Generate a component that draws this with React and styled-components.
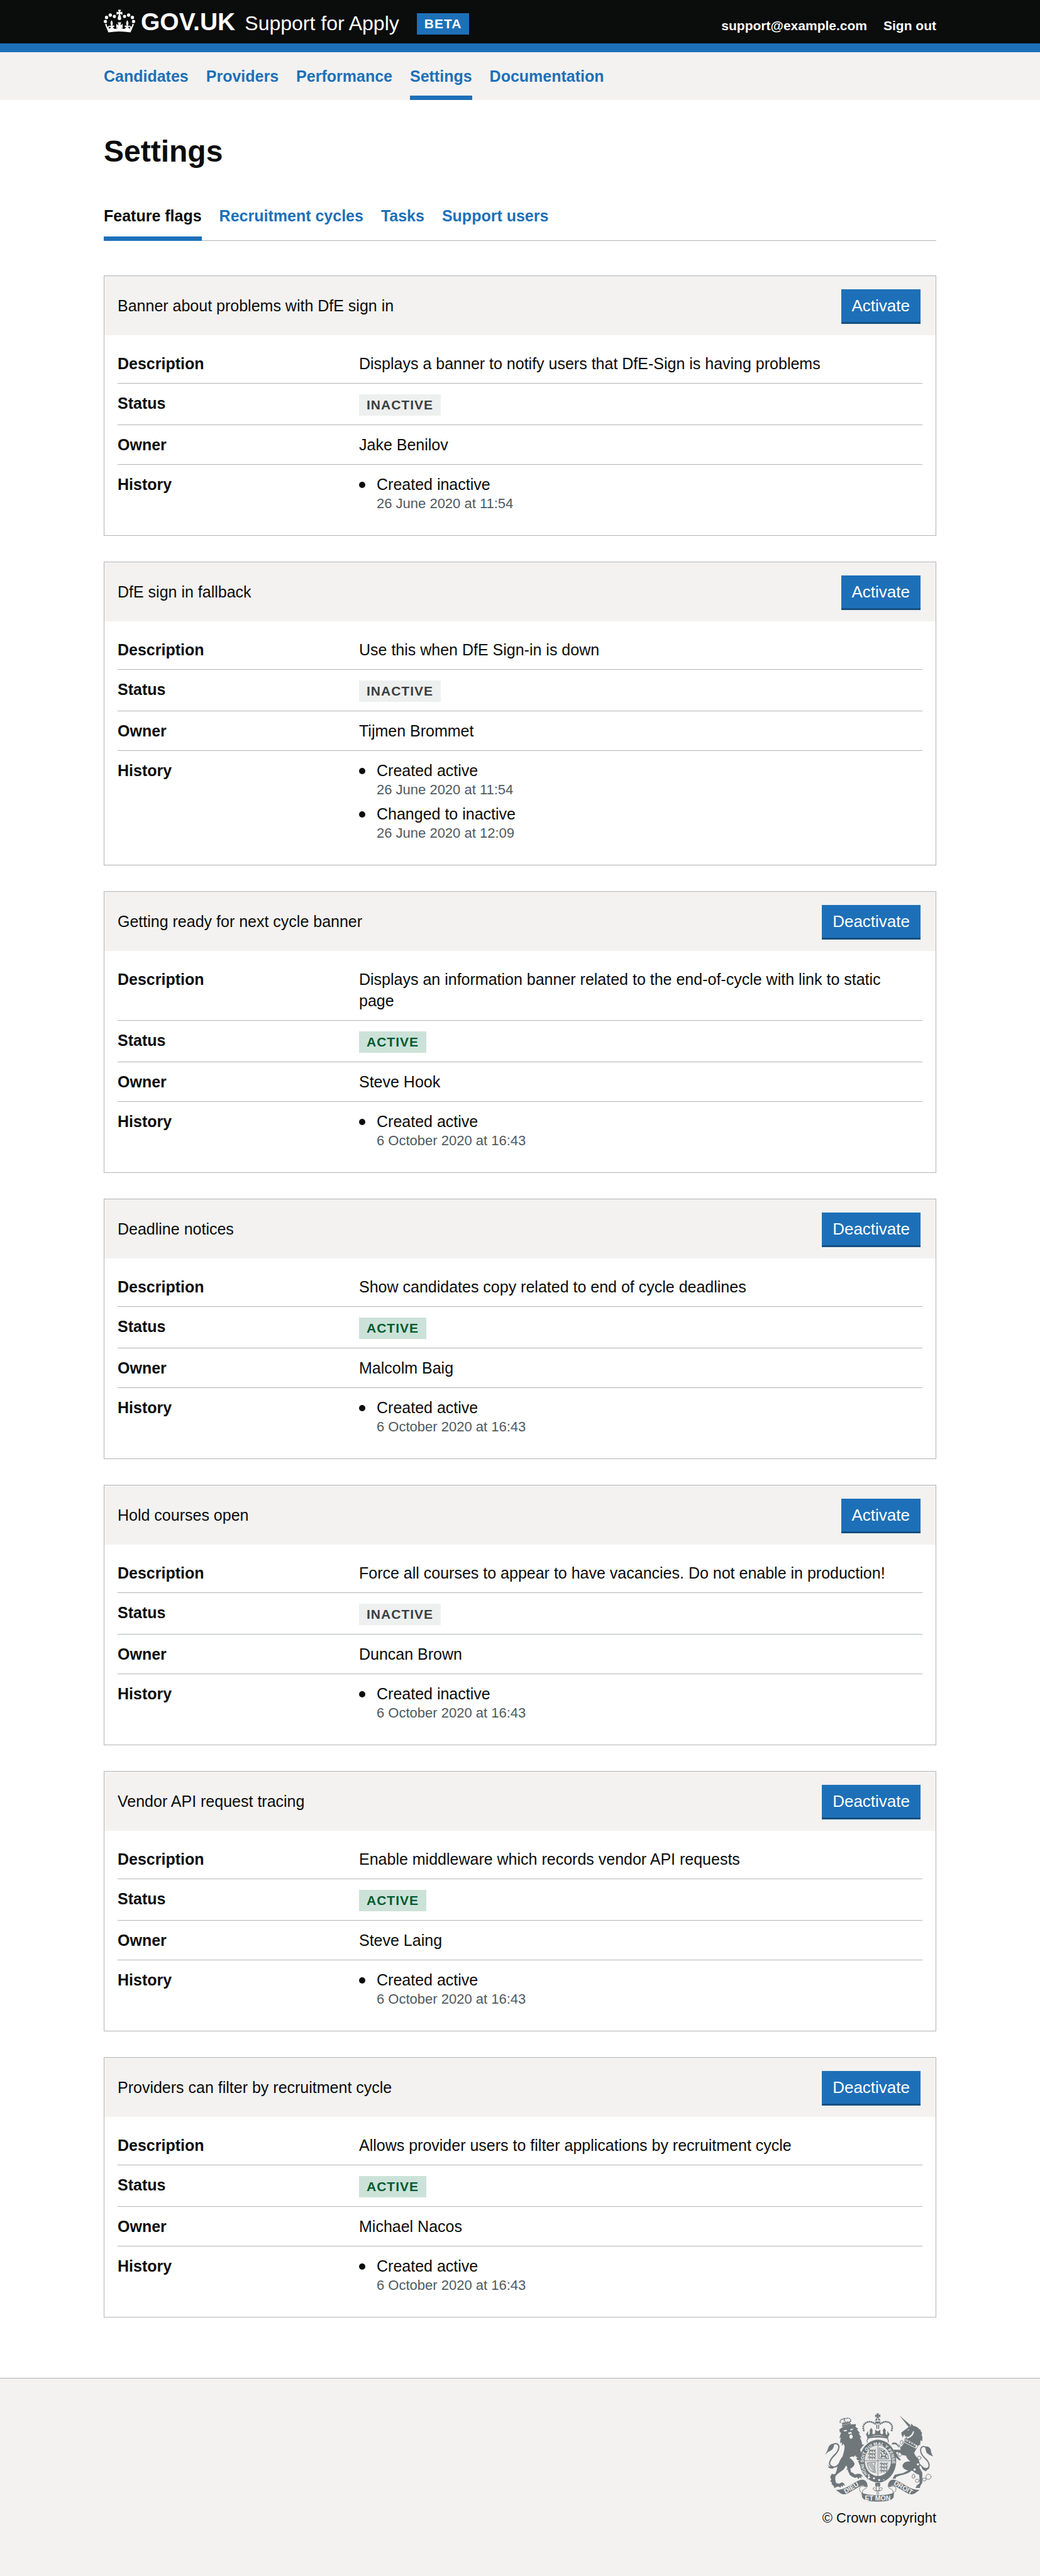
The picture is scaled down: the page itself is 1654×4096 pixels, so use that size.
import React from "react";
import styled, { createGlobalStyle, css } from "styled-components";

const color = {
  ink: "#0b0c0c",
  blue: "#1d70b8",
  pale: "#f3f2f1",
  rule: "#b1b4b6",
  muted: "#505a5f",
  crest: "#6f777b",
};

const GlobalStyle = createGlobalStyle`
  *, *::before, *::after { box-sizing: border-box; }
  html { background: ${color.pale}; }
  body {
    margin: 0;
    background: #fff;
    color: ${color.ink};
    font-family: "Liberation Sans", Arial, sans-serif;
    font-size: 25px;
    line-height: 34px;
  }
`;

const Container = styled.div`
  max-width: 1404px;
  margin: 0 auto;
  padding: 0 40px;
`;

const HeaderBar = styled.header`
  background: ${color.ink};
  border-bottom: 14px solid ${color.blue};
  color: #fff;
`;

const HeaderRow = styled(Container)`
  display: flex;
  justify-content: space-between;
  align-items: flex-end;
  min-height: 69px;
  padding-bottom: 14px;
`;

const Brand = styled.div`
  display: flex;
  align-items: flex-end;
  gap: 28px;
`;

const HomeLink = styled.a`
  display: flex;
  align-items: flex-end;
  gap: 9px;
  color: inherit;
  text-decoration: none;
`;

const CrownIcon = styled.svg`
  width: 50px;
  height: 40px;
  fill: currentColor;
`;

const Wordmark = styled.span`
  font-size: 39px;
  font-weight: 700;
  line-height: 40px;
`;

const Product = styled.span`
  margin-left: 6px;
  font-size: 32px;
  line-height: 36px;
`;

const tagTones = {
  blue: css`
    background: ${color.blue};
    color: #fff;
  `,
  grey: css`
    background: #eeefef;
    color: #383f43;
  `,
  green: css`
    background: #cce2d8;
    color: #005a30;
  `,
};

const Tag = styled.strong`
  display: block;
  width: fit-content;
  padding: 0 12px;
  font-size: 21px;
  font-weight: 700;
  line-height: 34px;
  letter-spacing: 1px;
  text-transform: uppercase;
  ${({ $tone }) => tagTones[$tone]}
`;

const AccountNav = styled.nav`
  display: flex;
  gap: 26px;
`;

const AccountLink = styled.a`
  color: #fff;
  font-size: 21px;
  font-weight: 700;
  line-height: 28px;
  text-decoration: none;
`;

const PrimaryNav = styled.nav`
  background: ${color.pale};
`;

const NavList = styled.ul`
  display: flex;
  flex-wrap: wrap;
  gap: 28px;
  margin: 0;
  padding: 0;
  list-style: none;
`;

const PrimaryList = styled(NavList)`
  padding-top: 21px;
`;

const NavLink = styled.a`
  display: block;
  padding-bottom: ${({ $inset }) => $inset}px;
  border-bottom: 7px solid ${({ $current }) => ($current ? color.blue : "transparent")};
  color: ${({ $current, $dark }) => ($current && $dark ? color.ink : color.blue)};
  font-weight: 700;
  text-decoration: none;
`;

const TabList = styled(NavList)`
  border-bottom: 1px solid ${color.rule};
`;

const TabItem = styled.li`
  margin-bottom: -1px;
`;

const Main = styled.main`
  padding: 56px 0 96px;
`;

const Heading = styled.h1`
  margin: 0 0 59px;
  font-size: 48px;
  line-height: 52px;
`;

const CardStack = styled.div`
  display: flex;
  flex-direction: column;
  gap: 41px;
  margin-top: 55px;
`;

const Card = styled.section`
  border: 1px solid ${color.rule};
`;

const CardHeader = styled.div`
  display: flex;
  justify-content: space-between;
  align-items: center;
  padding: 21px 24px 21px 21px;
  background: ${color.pale};
`;

const CardTitle = styled.h2`
  margin: 0;
  font-size: 25px;
  font-weight: 400;
`;

const ActionButton = styled.button`
  padding: 0 17px;
  border: 0;
  background: ${color.blue};
  box-shadow: 0 3px 0 #144e81;
  color: #fff;
  font-family: inherit;
  font-size: 26px;
  line-height: 52px;
  cursor: pointer;
`;

const Summary = styled.dl`
  margin: 0;
  padding: 14px 21px;
`;

const SummaryRow = styled.div`
  display: grid;
  grid-template-columns: 30% 70%;
  padding: 14px 0;
  border-bottom: 1px solid ${color.rule};

  &:last-child {
    border-bottom: 0;
  }
`;

const Key = styled.dt`
  font-weight: 700;
`;

const Value = styled.dd`
  margin: 0;
  padding-right: 28px;
`;

const StatusValue = styled(Value)`
  padding-top: 3px;
`;

const HistoryList = styled.ul`
  margin: 0;
  padding: 0 0 1px;
  list-style: none;
`;

const HistoryItem = styled.li`
  display: grid;
  grid-template-columns: 28px 1fr;
  margin-bottom: 7px;

  &::before {
    content: "";
    width: 10px;
    height: 10px;
    margin-top: 13px;
    border-radius: 50%;
    background: ${color.ink};
  }
`;

const EventDate = styled.time`
  display: block;
  color: ${color.muted};
  font-size: 22px;
  line-height: 28px;
`;

const Footer = styled.footer`
  padding: 55px 0 78px;
  border-top: 1px solid ${color.rule};
  background: ${color.pale};
`;

const FooterRow = styled(Container)`
  display: flex;
  justify-content: flex-end;
`;

const CopyrightLink = styled.a`
  display: flex;
  flex-direction: column;
  align-items: center;
  gap: 12px;
  color: ${color.ink};
  font-size: 22px;
  line-height: 28px;
  text-decoration: none;
`;

const CrestDrawing = styled.svg`
  width: 172px;
  height: 141px;
  fill: ${color.crest};
  stroke: none;
`;

const Lines = styled.g`
  fill: none;
  stroke: ${color.crest};
  stroke-width: ${({ $w }) => $w};
  stroke-linecap: round;
  stroke-linejoin: round;
`;

const Light = styled.g`
  fill: ${color.pale};
`;

const Motto = styled.g`
  fill: ${color.pale};
  font-weight: 700;
  font-size: ${({ $size }) => $size}px;
`;

function CrownHalf() {
  return (
    <>
      <circle cx="71" cy="147" r="11.5" />
      <circle cx="79" cy="119" r="11.5" />
      <circle cx="105" cy="103" r="11.5" />
      <circle cx="133" cy="112" r="11" />
      <path d="M158 66H169V138Q160 138 156 130Q155 120 163 100V94L148 101V80L163 84Z" />
      <path d="M92 222L68 166L80 163Q80 176 86 184L96 175Q100 186 93 194Q106 199 109 182Q100 190 97 180Q102 171 111 178L109 170Q102 155 114 139Q126 155 120 170L118 178Q128 170 133 179Q131 189 122 183Q126 199 140 198Q152 198 158 186L146 193V163L162 173L156 153H169V215Q130 215 92 222Z" />
    </>
  );
}

function Crown() {
  return (
    <CrownIcon viewBox="60 64 216 173" aria-hidden="true">
      <CrownHalf />
      <g transform="translate(336 0) scale(-1 1)">
        <CrownHalf />
      </g>
    </CrownIcon>
  );
}

const crownBeads = [
  [581, 412], [578, 398], [578, 384], [584, 371], [594, 361],
  [607, 355], [621, 353], [635, 355], [648, 360], [660, 367],
];

function RoyalCrownHalf() {
  return (
    <>
      {crownBeads.map(([x, y]) => (
        <circle key={`${x}-${y}`} cx={x} cy={y} r="6.5" />
      ))}
      <path d="M586 424L596 440L612 416L611 442Q622 446 622 432L625 424L621 414L633 394L644 414L640 424L643 438Q655 442 660 432V407L674 417H679V446Q640 446 608 466Q604 450 586 424Z" />
      <path d="M660 301L674 307L668 295H679V327H668L674 315L660 322Z" />
      <path d="M659 344Q662 331 675 328V344Z" />
      <path d="M657 350H679V366Q663 366 657 350Z" />
      <path d="M668 372H675V402H668Z" />
    </>
  );
}

function RibbonHalf() {
  return (
    <>
      <path d="M388 826Q432 826 475 800L535 765Q565 746 588 758Q608 772 607 802L592 804Q578 786 552 802L470 850Q440 862 420 849Z" />
      <Lines $w="4">
        <path d="M592 803Q556 788 551 818Q552 838 570 846M607 801Q602 814 584 820Q568 828 572 845" />
      </Lines>
    </>
  );
}

function PassantLions() {
  return (
    <Lines $w="6">
      <path d="M0 8L10 2L16 8L32 5L44 10L50 2M12 12L8 18M24 10L30 18M42 12L48 18" />
      <path d="M0 32L10 26L16 32L32 29L44 34L50 26M12 36L8 42M24 34L30 42M42 36L48 42" />
      <path d="M0 56L10 50L16 56L32 53L44 58L50 50M12 60L8 66M24 58L30 66M42 60L48 66" />
    </Lines>
  );
}

function Crest() {
  return (
    <CrestDrawing viewBox="312 294 750 612" aria-hidden="true">
      <g>
        <path d="M412 406L425 396Q460 376 500 370L527 369L524 388L544 402L533 405L556 433L546 432L566 466L553 459Q568 485 571 512L584 508L556 545L566 575Q576 600 580 620L586 650L574 640L570 654L562 642L552 652L546 634L540 626L552 622L534 616L530 604L540 600L524 594V584L512 596Q495 590 482 602Q510 620 518 645Q512 670 488 676L492 700Q505 705 520 718L545 712Q568 715 574 734L561 730L568 747L552 737L545 751L535 737L520 742Q500 735 485 722L470 690L475 682L461 688L468 670L458 655L463 635Q460 662 440 685Q410 705 388 725Q378 745 390 778L410 782L430 772Q448 778 450 797L438 790L436 804L425 796L420 809L405 802L388 806L378 814L372 797L356 783L362 775L348 765L356 755L348 735L360 712L372 718L385 712Q395 690 398 665Q412 620 435 590Q450 540 448 520L440 505L428 520L430 495L418 502L418 478L424 460L412 468L418 445L424 428L415 426Z" />
        <Light>
          <path d="M438 414L462 408L466 416L448 420ZM486 406L508 398L504 408L490 412ZM472 428L494 422L500 436L488 434L478 440Z" />
          <ellipse cx="493" cy="456" rx="11" ry="14" />
        </Light>
        <path d="M312 582Q332 552 338 524Q356 500 374 506Q378 538 352 552Q328 562 312 582ZM327 648L345 662L378 664L366 678L350 676L332 668L340 664Z" />
        <Lines $w="9">
          <path d="M362 512Q402 492 409 524Q408 556 380 582Q348 612 343 642Q352 668 380 666Q402 660 420 632" />
        </Lines>
        <path d="M428 378L490 362L494 371L432 388ZM432 374L428 352L438 364L444 348L450 362L456 344L462 359L472 344L474 357L488 344L486 361ZM440 326H452V338H440Z" />
        {[[418, 358], [418, 348], [424, 339], [433, 335], [446, 345], [459, 331], [470, 327], [482, 330], [490, 339], [490, 350]].map(([x, y]) => (
          <circle key={`${x}-${y}`} cx={x} cy={y} r="4.5" />
        ))}
      </g>

      <g>
        <RoyalCrownHalf />
        <g transform="translate(1356 0) scale(-1 1)">
          <RoyalCrownHalf />
        </g>
        <path d="M607 462Q678 438 749 462L752 470Q678 454 604 470Z" />
        <Lines $w="5">
          <path d="M612 470Q600 480 606 494M744 470Q756 480 750 494" />
        </Lines>
      </g>

      <g>
        <path
          fillRule="evenodd"
          d="M552 625A127 148 0 1 1 806 625A127 148 0 1 1 552 625ZM588 623A91 106 0 1 0 770 623A91 106 0 1 0 588 623Z"
        />
        <path d="M594 620V600Q604 535 674 525V620ZM684 525Q754 535 764 600V620H684ZM594 627H674V718Q604 708 594 645ZM684 627H764V645Q754 708 684 718Z" opacity="0.14" />
        <Lines $w="4">
          <path d="M679 518V728M588 623H770" />
          <path d="M690 534Q746 548 754 610H690Z" />
          <path d="M606 638L662 632Q650 660 662 704Q612 702 606 638M616 644L650 698M626 642L655 690M636 640L655 672" />
          <path d="M698 548L712 560L724 552L720 572L742 576L728 588L740 604L716 590L700 602L708 582L698 566" strokeWidth="7" />
        </Lines>
        <g transform="translate(612 544)">
          <PassantLions />
        </g>
        <g transform="translate(694 636)">
          <PassantLions />
        </g>
        <path id="garter" fill="none" d="M609 716A98 118 0 1 1 749 716" />
        <Motto $size="31">
          <text>
            <textPath href="#garter">HONI SOIT QUI MAL Y PENSE</textPath>
          </text>
        </Motto>
        <path d="M604 716L622 708L645 720Q680 742 738 736L748 748Q715 776 678 773Q640 768 618 748L604 752Z" />
        <Light>
          <circle cx="652" cy="744" r="7" />
          <circle cx="688" cy="756" r="7" />
          <circle cx="720" cy="755" r="4" />
          <path d="M611 718L622 716L618 730L628 738L616 746L606 748L612 734Z" />
        </Light>
        <path d="M661 776H695V798L687 806L678 788L669 806L661 798Z" />
        <Lines $w="4">
          <path d="M678 794Q658 816 674 836M678 794Q698 816 682 836M672 828Q644 834 647 812Q658 804 668 816M684 828Q712 834 709 812Q698 804 688 816M662 832H694" />
          <circle cx="678" cy="848" r="7" />
        </Lines>
      </g>

      <g>
        <path d="M828 308L906 376L893 390Z" />
        <path d="M880 398L893 388L908 381L910 366L926 381Q954 386 966 404L978 410L975 416L988 434L981 437L988 462L986 489L976 480L972 512L958 518L868 468L888 452L870 458L862 440L852 462L844 444L841 428Z" />
        <Light>
          <path d="M930 418Q930 452 884 470L878 462Q914 450 922 420ZM880 410L898 406L890 414Z" />
        </Light>
        <path d="M862 496L946 540L930 570Q938 590 958 610Q975 640 968 672L987 705V775L974 796L970 812H940L950 792L968 780L966 722L942 710L915 690Q884 716 835 724L806 735L802 747H780L796 720L855 708L888 690Q850 684 849 655Q862 622 905 628Q880 610 874 588L850 584L830 566L803 562L820 594L840 618L826 620L803 598L788 560L790 545L834 548L837 535L818 520L800 508L773 510L782 496L806 497L832 530L846 520Z" />
        <Lines $w="4">
          <path d="M866 472L958 518L946 540M866 472L862 494" />
          <ellipse cx="844" cy="495" rx="10" ry="13" />
          <ellipse cx="824" cy="519" rx="7" ry="8" />
          <ellipse cx="832" cy="578" rx="13" ry="14" />
          <circle cx="966" cy="603" r="12" />
          <ellipse cx="926" cy="731" rx="10" ry="15" />
          <ellipse cx="951" cy="762" rx="13" ry="11" />
          <ellipse cx="1001" cy="753" rx="13" ry="11" />
          <circle cx="1030" cy="734" r="18" />
        </Lines>
        <path d="M872 476L882 492L890 482L898 502L908 492L914 510L926 502L930 518L942 512L940 532L866 494Z" />
        <Light>
          <circle cx="957" cy="648" r="8" />
          <circle cx="934" cy="684" r="8" />
        </Light>
        <path d="M1006 526Q1032 518 1046 546Q1046 570 1062 592Q1036 586 1016 566Q1010 548 1006 526ZM980 668L990 684L1012 697L1016 690L1040 672L1010 674Z" />
        <Lines $w="8">
          <path d="M1010 528Q980 516 975 546Q974 574 1002 602Q1038 632 1034 660Q1022 686 1000 676L968 648" />
        </Lines>
      </g>

      <g>
        <RibbonHalf />
        <g transform="translate(1356 0) scale(-1 1)">
          <RibbonHalf />
        </g>
        <path d="M565 844Q604 862 678 862Q752 862 791 844L788 876Q778 906 678 906Q580 906 570 876Z" />
        <Motto $size="46">
          <text x="678" y="900" textAnchor="middle">ET MON</text>
          <text transform="translate(456 852) rotate(-32)">DIEU</text>
          <text transform="translate(786 786) rotate(30)">DROIT</text>
        </Motto>
      </g>
    </CrestDrawing>
  );
}

const primaryLinks = ["Candidates", "Providers", "Performance", "Settings", "Documentation"];
const tabs = ["Feature flags", "Recruitment cycles", "Tasks", "Support users"];

const october = "6 October 2020 at 16:43";
const features = [
  {
    name: "Banner about problems with DfE sign in",
    description: "Displays a banner to notify users that DfE-Sign is having problems",
    active: false,
    owner: "Jake Benilov",
    history: [["Created inactive", "26 June 2020 at 11:54"]],
  },
  {
    name: "DfE sign in fallback",
    description: "Use this when DfE Sign-in is down",
    active: false,
    owner: "Tijmen Brommet",
    history: [
      ["Created active", "26 June 2020 at 11:54"],
      ["Changed to inactive", "26 June 2020 at 12:09"],
    ],
  },
  {
    name: "Getting ready for next cycle banner",
    description: "Displays an information banner related to the end-of-cycle with link to static page",
    active: true,
    owner: "Steve Hook",
    history: [["Created active", october]],
  },
  {
    name: "Deadline notices",
    description: "Show candidates copy related to end of cycle deadlines",
    active: true,
    owner: "Malcolm Baig",
    history: [["Created active", october]],
  },
  {
    name: "Hold courses open",
    description: "Force all courses to appear to have vacancies. Do not enable in production!",
    active: false,
    owner: "Duncan Brown",
    history: [["Created inactive", october]],
  },
  {
    name: "Vendor API request tracing",
    description: "Enable middleware which records vendor API requests",
    active: true,
    owner: "Steve Laing",
    history: [["Created active", october]],
  },
  {
    name: "Providers can filter by recruitment cycle",
    description: "Allows provider users to filter applications by recruitment cycle",
    active: true,
    owner: "Michael Nacos",
    history: [["Created active", october]],
  },
];

function FeatureCard({ feature }) {
  return (
    <Card>
      <CardHeader>
        <CardTitle>{feature.name}</CardTitle>
        <ActionButton type="button">{feature.active ? "Deactivate" : "Activate"}</ActionButton>
      </CardHeader>
      <Summary>
        <SummaryRow>
          <Key>Description</Key>
          <Value>{feature.description}</Value>
        </SummaryRow>
        <SummaryRow>
          <Key>Status</Key>
          <StatusValue>
            <Tag $tone={feature.active ? "green" : "grey"}>{feature.active ? "Active" : "Inactive"}</Tag>
          </StatusValue>
        </SummaryRow>
        <SummaryRow>
          <Key>Owner</Key>
          <Value>{feature.owner}</Value>
        </SummaryRow>
        <SummaryRow>
          <Key>History</Key>
          <Value>
            <HistoryList>
              {feature.history.map(([event, date]) => (
                <HistoryItem key={event}>
                  <div>
                    {event}
                    <EventDate>{date}</EventDate>
                  </div>
                </HistoryItem>
              ))}
            </HistoryList>
          </Value>
        </SummaryRow>
      </Summary>
    </Card>
  );
}

export default function App() {
  return (
    <>
      <GlobalStyle />
      <HeaderBar>
        <HeaderRow>
          <Brand>
            <HomeLink href="#home">
              <Crown />
              <Wordmark>GOV.UK</Wordmark>
              <Product>Support for Apply</Product>
            </HomeLink>
            <Tag $tone="blue">Beta</Tag>
          </Brand>
          <AccountNav aria-label="Account">
            <AccountLink href="#account">support@example.com</AccountLink>
            <AccountLink href="#sign-out">Sign out</AccountLink>
          </AccountNav>
        </HeaderRow>
      </HeaderBar>
      <PrimaryNav aria-label="Primary">
        <Container>
          <PrimaryList>
            {primaryLinks.map((label) => (
              <li key={label}>
                <NavLink href={`#${label.toLowerCase()}`} $inset={14} $current={label === "Settings"}>
                  {label}
                </NavLink>
              </li>
            ))}
          </PrimaryList>
        </Container>
      </PrimaryNav>
      <Main>
        <Container>
          <Heading>Settings</Heading>
          <nav aria-label="Settings sections">
            <TabList>
              {tabs.map((label, index) => (
                <TabItem key={label}>
                  <NavLink href={`#tab-${index}`} $inset={16} $current={index === 0} $dark>
                    {label}
                  </NavLink>
                </TabItem>
              ))}
            </TabList>
          </nav>
          <CardStack>
            {features.map((feature) => (
              <FeatureCard key={feature.name} feature={feature} />
            ))}
          </CardStack>
        </Container>
      </Main>
      <Footer>
        <FooterRow>
          <CopyrightLink href="#copyright">
            <Crest />
            © Crown copyright
          </CopyrightLink>
        </FooterRow>
      </Footer>
    </>
  );
}
